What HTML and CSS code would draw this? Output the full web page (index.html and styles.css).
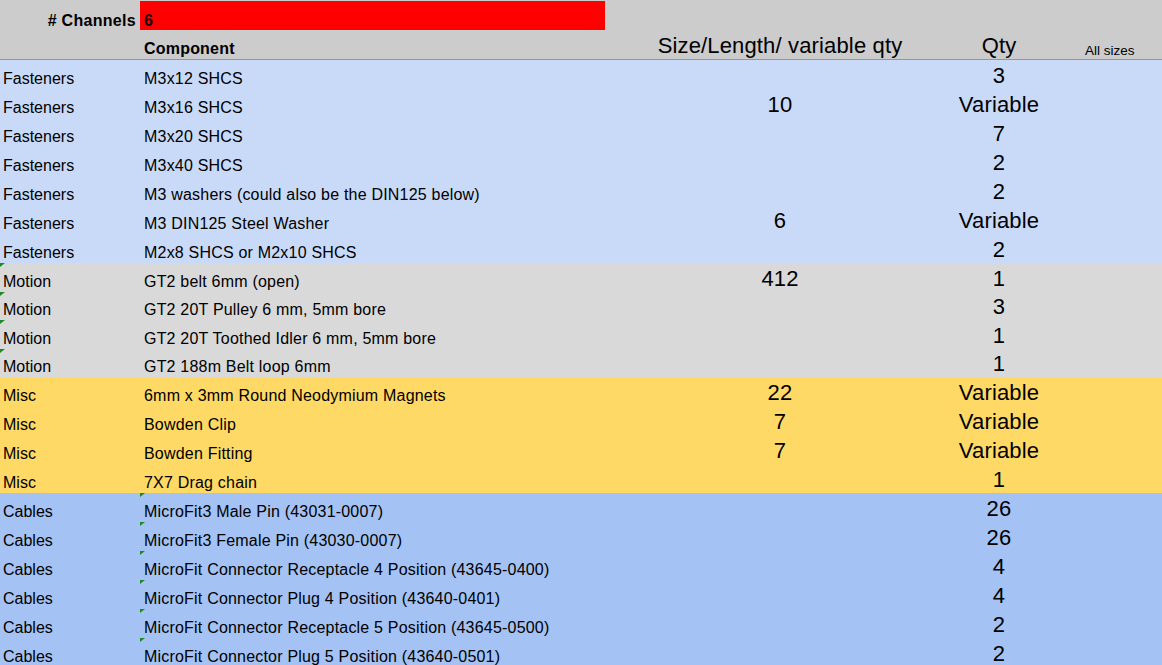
FILE: index.html
```html
<!DOCTYPE html>
<html>
<head>
<meta charset="utf-8">
<link rel="stylesheet" href="styles.css">
</head>
<body>
<div class="sheet">
  <div class="row hdr top">
    <div class="cell a bold right"># Channels</div>
    <div class="cell b bold red">6</div>
    <div class="cell c"></div>
    <div class="cell d"></div>
    <div class="cell e"></div>
  </div>
  <div class="row hdr head">
    <div class="cell a"></div>
    <div class="cell b bold">Component</div>
    <div class="cell c big">Size/Length/ variable qty</div>
    <div class="cell d big">Qty</div>
    <div class="cell e small">All sizes</div>
  </div>

  <div class="row fast"><div class="cell a">Fasteners</div><div class="cell b">M3x12 SHCS</div><div class="cell c big"></div><div class="cell d big">3</div><div class="cell e"></div></div>
  <div class="row fast"><div class="cell a">Fasteners</div><div class="cell b">M3x16 SHCS</div><div class="cell c big">10</div><div class="cell d big">Variable</div><div class="cell e"></div></div>
  <div class="row fast"><div class="cell a">Fasteners</div><div class="cell b">M3x20 SHCS</div><div class="cell c big"></div><div class="cell d big">7</div><div class="cell e"></div></div>
  <div class="row fast"><div class="cell a">Fasteners</div><div class="cell b">M3x40 SHCS</div><div class="cell c big"></div><div class="cell d big">2</div><div class="cell e"></div></div>
  <div class="row fast"><div class="cell a">Fasteners</div><div class="cell b">M3 washers (could also be the DIN125 below)</div><div class="cell c big"></div><div class="cell d big">2</div><div class="cell e"></div></div>
  <div class="row fast"><div class="cell a">Fasteners</div><div class="cell b">M3 DIN125 Steel Washer</div><div class="cell c big">6</div><div class="cell d big">Variable</div><div class="cell e"></div></div>
  <div class="row fast"><div class="cell a">Fasteners</div><div class="cell b">M2x8 SHCS or M2x10 SHCS</div><div class="cell c big"></div><div class="cell d big">2</div><div class="cell e"></div></div>

  <div class="row motion"><div class="cell a note">Motion</div><div class="cell b">GT2 belt 6mm (open)</div><div class="cell c big">412</div><div class="cell d big">1</div><div class="cell e"></div></div>
  <div class="row motion short"><div class="cell a note">Motion</div><div class="cell b">GT2 20T Pulley 6 mm, 5mm bore</div><div class="cell c big"></div><div class="cell d big">3</div><div class="cell e"></div></div>
  <div class="row motion"><div class="cell a note">Motion</div><div class="cell b">GT2 20T Toothed Idler 6 mm, 5mm bore</div><div class="cell c big"></div><div class="cell d big">1</div><div class="cell e"></div></div>
  <div class="row motion short"><div class="cell a note">Motion</div><div class="cell b">GT2 188m Belt loop 6mm</div><div class="cell c big"></div><div class="cell d big">1</div><div class="cell e"></div></div>

  <div class="row misc"><div class="cell a">Misc</div><div class="cell b">6mm x 3mm Round Neodymium Magnets</div><div class="cell c big">22</div><div class="cell d big">Variable</div><div class="cell e"></div></div>
  <div class="row misc"><div class="cell a">Misc</div><div class="cell b">Bowden Clip</div><div class="cell c big">7</div><div class="cell d big">Variable</div><div class="cell e"></div></div>
  <div class="row misc"><div class="cell a">Misc</div><div class="cell b">Bowden Fitting</div><div class="cell c big">7</div><div class="cell d big">Variable</div><div class="cell e"></div></div>
  <div class="row misc"><div class="cell a">Misc</div><div class="cell b">7X7 Drag chain</div><div class="cell c big"></div><div class="cell d big">1</div><div class="cell e"></div></div>

  <div class="row cables"><div class="cell a">Cables</div><div class="cell b note">MicroFit3 Male Pin (43031-0007)</div><div class="cell c big"></div><div class="cell d big">26</div><div class="cell e"></div></div>
  <div class="row cables"><div class="cell a">Cables</div><div class="cell b note">MicroFit3 Female Pin (43030-0007)</div><div class="cell c big"></div><div class="cell d big">26</div><div class="cell e"></div></div>
  <div class="row cables"><div class="cell a">Cables</div><div class="cell b note">MicroFit Connector Receptacle 4 Position (43645-0400)</div><div class="cell c big"></div><div class="cell d big">4</div><div class="cell e"></div></div>
  <div class="row cables"><div class="cell a">Cables</div><div class="cell b note">MicroFit Connector Plug 4 Position (43640-0401)</div><div class="cell c big"></div><div class="cell d big">4</div><div class="cell e"></div></div>
  <div class="row cables"><div class="cell a">Cables</div><div class="cell b note">MicroFit Connector Receptacle 5 Position (43645-0500)</div><div class="cell c big"></div><div class="cell d big">2</div><div class="cell e"></div></div>
  <div class="row cables"><div class="cell a">Cables</div><div class="cell b note">MicroFit Connector Plug 5 Position (43640-0501)</div><div class="cell c big"></div><div class="cell d big">2</div><div class="cell e"></div></div>
</div>
</body>
</html>
```

FILE: styles.css
```css
html, body {
  margin: 0;
  padding: 0;
  background: #a4c2f4;
  overflow: hidden;
}

.sheet {
  width: 1162px;
  font-family: "Liberation Sans", Arial, sans-serif;
  font-size: 16px;
  color: #000;
}

.row {
  display: grid;
  grid-template-columns: 140px 465px 350px 88px 1fr;
  height: 29px;
}

.row.short {
  height: 28px;
}

.hdr {
  background: #cccccc;
}

.row.top {
  height: 31px;
}

.row.head {
  height: 28px;
  border-bottom: 1px solid #5cb58c;
}

.fast { background: #c9daf8; }
.motion { background: #d9d9d9; }
.misc { background: #ffd966; }
.cables { background: #a4c2f4; }

.cell {
  position: relative;
  display: flex;
  align-items: flex-end;
  white-space: nowrap;
  padding-bottom: 1px;
  line-height: 1.15;
}

.cell.a { padding-left: 3px; }
.cell.b {
  padding-left: 4px;
  letter-spacing: 0.2px;
}
.cell.c, .cell.d { justify-content: center; }

.cell.right {
  justify-content: flex-end;
  padding-right: 4px;
  letter-spacing: 0.3px;
}

.bold { font-weight: bold; }

.red {
  background: #ff0000;
  margin-top: 1px;
  margin-bottom: 1px;
  padding-bottom: 0;
  color: #1a0000;
}

.big {
  font-size: 22px;
  letter-spacing: 0.15px;
}

.small {
  font-size: 13.5px;
  padding-left: 42px;
  padding-bottom: 0;
}

.note::before {
  content: "";
  position: absolute;
  left: 0;
  top: 0;
  width: 0;
  height: 0;
  border-top: 4px solid #1d8a23;
  border-right: 5px solid transparent;
}
```
